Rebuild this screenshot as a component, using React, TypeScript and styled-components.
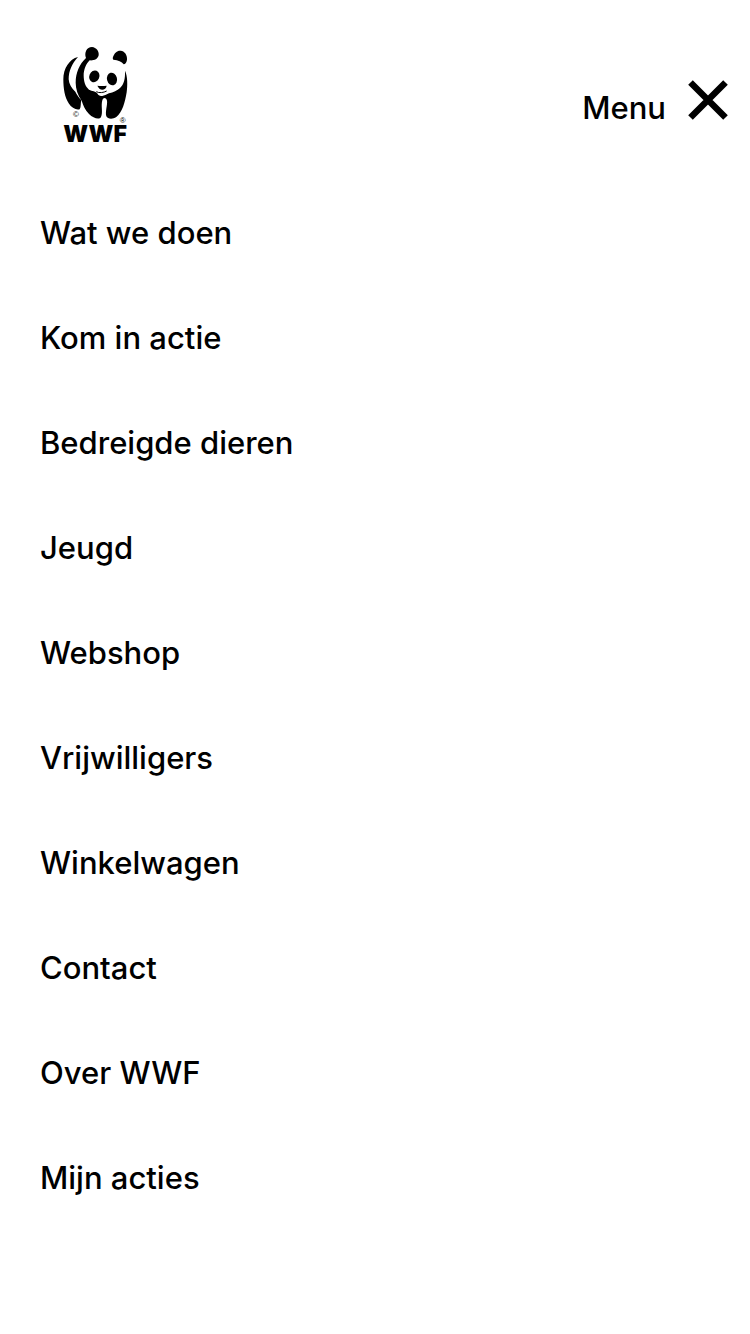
import React from 'react';
import styled, { createGlobalStyle } from 'styled-components';

const GlobalStyle = createGlobalStyle`
  *, *::before, *::after { box-sizing: border-box; }
  body {
    margin: 0;
    background: #fff;
    color: #000;
    font-family: Inter, "Liberation Sans", sans-serif;
  }
`;

const Header = styled.header`
  display: flex;
  justify-content: space-between;
  align-items: flex-start;
  padding: 46px 20px 0 63px;
`;

const Logo = styled.a`
  display: flex;
  flex-direction: column;
  align-items: center;
  width: 64px;
  color: inherit;
  text-decoration: none;
`;

const Panda = styled.svg`
  display: block;
  width: 64px;
  height: 77px;
  overflow: visible;
`;

const Mark = styled.text`
  font-family: "Liberation Sans", sans-serif;
  font-size: 24px;
  text-anchor: middle;
`;

const LogoName = styled.span`
  font-size: 23px;
  font-weight: 900;
  line-height: 22px;
`;

const MenuButton = styled.button`
  display: flex;
  align-items: center;
  gap: 20px;
  margin-top: 32px;
  padding: 0;
  border: 0;
  background: none;
  color: inherit;
  font: inherit;
  cursor: pointer;
`;

const MenuLabel = styled.span`
  padding-top: 16px;
  font-size: 31px;
  font-weight: 500;
  line-height: 28px;
`;

const CloseIcon = styled.svg`
  display: block;
  width: 44px;
  height: 44px;
`;

const MenuList = styled.ul`
  margin: 0;
  padding: 35px 40px;
  list-style: none;
`;

const MenuLink = styled.a`
  display: block;
  color: inherit;
  font-size: 31px;
  font-weight: 500;
  line-height: 105px;
  text-decoration: none;
`;

const items = [
  'Wat we doen',
  'Kom in actie',
  'Bedreigde dieren',
  'Jeugd',
  'Webshop',
  'Vrijwilligers',
  'Winkelwagen',
  'Contact',
  'Over WWF',
  'Mijn acties',
];

export default function App() {
  return (
    <>
      <GlobalStyle />
      <Header>
        <Logo href="#" aria-label="WWF">
          <Panda viewBox="24 18 192 231" aria-hidden="true">
            <path d="M69 51C43 57 25 86 25 118C25 145 29 172 41 190C50 204 63 211 74 208C79 200 76 191 79 181C70 170 65 163 61 155C50 145 42 133 41 118C41 92 51 71 69 51Z" />
            <path d="M93 54C87 38 95 21 111 21C124 22 133 34 131 46C128 58 117 62 104 61C93 71 86 90 86 106C86 125 91 140 102 149C112 154 121 153 126 159C130 167 137 169 144 167C151 166 155 163 162 160C175 157 187 152 195 144C207 133 211 115 210 92C218 108 218 137 215 157C210 188 202 217 184 231C172 239 158 237 154 229C150 215 158 194 156 182C154 172 145 171 142 181C137 198 145 218 138 231C133 240 115 235 102 222C89 209 85 196 80 182C68 165 62 146 62 128C62 98 73 73 93 54Z" />
            <path d="M174 51C179 36 190 29 201 33C212 37 217 48 216 59C215 67 211 72 206 73C200 65 190 60 175 59C173 57 173 54 174 51Z" />
            <ellipse cx="118" cy="109" rx="15" ry="18" transform="rotate(22 118 109)" />
            <ellipse cx="171" cy="117" rx="15" ry="19" transform="rotate(-14 171 117)" />
            <path d="M127 137C136 138 145 138 155 137C154 145 148 149 142 149C136 149 130 144 127 137Z" />
            <path d="M124 155C132 160 146 158 155 153" fill="none" stroke="#000" strokeWidth="3" />
            <path d="M129 161C136 162 144 162 151 159C149 167 133 169 129 161Z" fill="#fff" />
            <Mark x="63" y="231">©</Mark>
            <Mark x="203" y="250">®</Mark>
          </Panda>
          <LogoName>WWF</LogoName>
        </Logo>
        <MenuButton type="button" aria-expanded="true">
          <MenuLabel>Menu</MenuLabel>
          <CloseIcon viewBox="0 0 88 88" aria-hidden="true">
            <path d="M9 9L79 79M79 9L9 79" stroke="#000" strokeWidth="13" />
          </CloseIcon>
        </MenuButton>
      </Header>
      <nav aria-label="Menu">
        <MenuList>
          {items.map((item) => (
            <li key={item}>
              <MenuLink href="#">{item}</MenuLink>
            </li>
          ))}
        </MenuList>
      </nav>
    </>
  );
}
